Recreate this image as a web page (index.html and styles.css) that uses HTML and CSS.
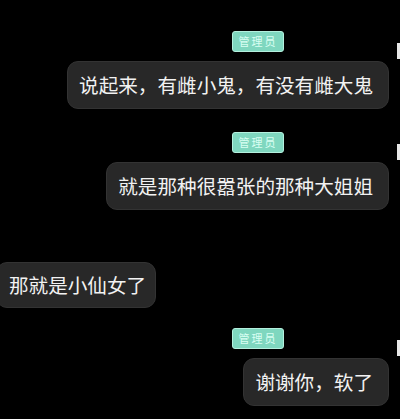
FILE: index.html
```html
<!DOCTYPE html>
<html lang="zh-CN">

<head>
    <meta charset="UTF-8">
    <meta name="viewport" content="width=device-width, initial-scale=1.0">
    <title>聊天记录</title>
    <link rel="stylesheet" href="styles.css">
</head>

<body>

    <main class="chat">
        <div class="msg mine first">
            <div class="msg-body">
                <span class="badge">管理员</span>
                <div class="bubble">说起来，有雌小鬼，有没有雌大鬼</div>
            </div>
            <div class="avatar"></div>
        </div>

        <div class="msg mine">
            <div class="msg-body">
                <span class="badge">管理员</span>
                <div class="bubble">就是那种很嚣张的那种大姐姐</div>
            </div>
            <div class="avatar"></div>
        </div>

        <div class="msg theirs">
            <div class="bubble">那就是小仙女了</div>
        </div>

        <div class="msg mine">
            <div class="msg-body">
                <span class="badge">管理员</span>
                <div class="bubble">谢谢你，软了</div>
            </div>
            <div class="avatar"></div>
        </div>
    </main>

</body>

</html>
```

FILE: styles.css
```css
body {
    margin: 0;
    background-color: #000;
    color: #f2f2f2;
    font-family: "Noto Sans CJK SC", "Noto Sans", sans-serif;
    overflow: hidden;
}

.chat {
    display: flex;
    flex-direction: column;
    padding-top: 31px;
}

.msg {
    display: flex;
}

.msg.mine {
    justify-content: flex-end;
    margin-top: 23px;
}

.msg.mine.first {
    margin-top: 0;
}

.msg.theirs {
    margin-top: 52px;
    margin-bottom: -3px;
}

.msg-body {
    display: flex;
    flex-direction: column;
    align-items: flex-end;
    margin-right: 8px;
}

.badge {
    width: 50px;
    height: 19px;
    margin-right: 105px;
    margin-bottom: 9px;
    border-radius: 3px;
    border: 1px solid #b4f0de;
    background-color: #7fd7bf;
    color: #d9fff3;
    font-size: 11px;
    line-height: 19px;
    text-align: center;
    letter-spacing: 2px;
}

.bubble {
    height: 48px;
    box-sizing: border-box;
    padding: 0 15px 0 11px;
    border-radius: 11px;
    border: 1px solid #333;
    background-color: #282828;
    font-size: 19.6px;
    line-height: 46px;
    white-space: nowrap;
}

.theirs .bubble {
    height: 46px;
    line-height: 44px;
    margin-left: -4px;
    padding: 0 9px 0 12px;
}

.avatar {
    width: 3px;
    height: 16px;
    margin-top: 12px;
    background-color: #e8e8e8;
}
```
